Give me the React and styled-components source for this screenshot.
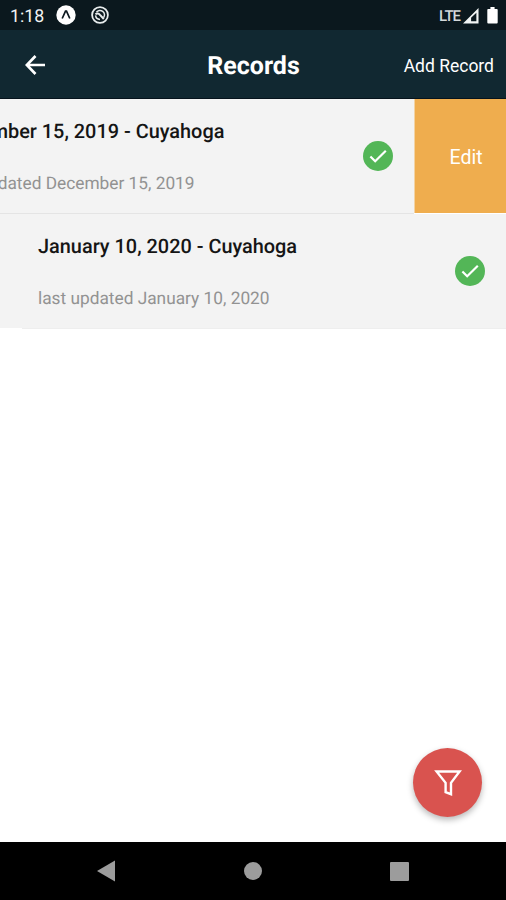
import styled, { createGlobalStyle } from 'styled-components';

const records = [
  {
    title: 'December 15, 2019 - Cuyahoga',
    updated: 'last updated December 15, 2019',
    swiped: true,
  },
  {
    title: 'January 10, 2020 - Cuyahoga',
    updated: 'last updated January 10, 2020',
    swiped: false,
  },
];

const CheckIcon = () => (
  <svg width="30" height="30" viewBox="0 0 30 30">
    <circle cx="15" cy="15" r="15" fill="#53b657" />
    <path d="M7.4 15.4l4.8 4.9L22.8 9.8" fill="none" stroke="#fff" strokeWidth="2.2" />
  </svg>
);

const RecordItem = ({ title, updated, swiped }) => (
  <Item $swiped={swiped}>
    <Content $swiped={swiped}>
      <Details>
        <RecordTitle>{title}</RecordTitle>
        <Updated>{updated}</Updated>
      </Details>
      <CheckIcon />
    </Content>
    {swiped && <EditButton>Edit</EditButton>}
  </Item>
);

export default function App() {
  return (
    <Screen>
      <GlobalStyle />
      <StatusBar>
        <StatusGroup>
          <Clock>1:18</Clock>
          <svg width="20" height="20" viewBox="0 0 20 20">
            <circle cx="10" cy="10" r="9.7" fill="#fff" />
            <path d="M6.2 13.5L9.5 6.2h1l3.3 7.3" fill="none" stroke="#0b181e" strokeWidth="1.7" />
          </svg>
          <DebugIcon width="18" height="18" viewBox="0 0 18 18">
            <circle cx="9" cy="9" r="7.9" fill="none" stroke="#e8eced" strokeWidth="1.8" />
            <path
              d="M5.4 6.2A4.4 4.4 0 1 1 12.6 11.6M4.6 9.4A4.5 4.5 0 0 0 9 13.4"
              fill="none"
              stroke="#e8eced"
              strokeWidth="1.5"
            />
            <path d="M4.4 8.2q3-1.6 4.6.6l3.8 4.2" fill="none" stroke="#e8eced" strokeWidth="2" />
          </DebugIcon>
        </StatusGroup>
        <StatusGroup>
          <Network>LTE</Network>
          <Signal width="16" height="16" viewBox="0 0 17 17">
            <path fill="#f2f4f4" fillRule="evenodd" d="M0 16.5L16.5 0v16.5zM8.6 10.4v3.6h5.6V5z" />
          </Signal>
          <Battery width="11" height="17" viewBox="0 0 11 18">
            <path fill="#fff" d="M3.3 0h4.4v2H10q1 0 1 1v13.5q0 1-1 1H1q-1 0-1-1V3q0-1 1-1h2.3z" />
          </Battery>
        </StatusGroup>
      </StatusBar>

      <Header>
        <BackButton aria-label="Back">
          <svg width="20" height="20" viewBox="0 0 20 20">
            <path d="M10.5 1L1.8 10l8.7 9M2 10h18" fill="none" stroke="#fff" strokeWidth="2.7" />
          </svg>
        </BackButton>
        <Title>Records</Title>
        <AddButton>Add Record</AddButton>
      </Header>

      <List>
        {records.map((record) => (
          <RecordItem key={record.title} {...record} />
        ))}
        <ListEnd />
      </List>

      <FilterButton aria-label="Filter">
        <svg width="28" height="26" viewBox="0 0 28 26">
          <path
            d="M2.6 1.5h23L17 12.8v11.4l-5.4-2v-9.4z"
            fill="none"
            stroke="#fff"
            strokeWidth="2.4"
          />
        </svg>
      </FilterButton>

      <NavBar>
        <svg width="18" height="22" viewBox="0 0 18 22">
          <path d="M0 11L18 .5v21z" fill="#9c9c9c" />
        </svg>
        <Home />
        <Recents />
      </NavBar>
    </Screen>
  );
}

const GlobalStyle = createGlobalStyle`
  * {
    box-sizing: border-box;
  }

  body {
    margin: 0;
    font-family: Roboto, sans-serif;
    text-rendering: geometricPrecision;
  }

  button {
    border: 0;
    padding: 0;
    background: none;
    color: inherit;
    font-family: inherit;
  }
`;

const Screen = styled.div`
  position: relative;
  display: flex;
  flex-direction: column;
  width: 506px;
  height: 900px;
  overflow: hidden;
  background: #fff;
`;

const StatusBar = styled.div`
  display: flex;
  justify-content: space-between;
  height: 30px;
  padding: 0 8px 0 10px;
  background: #0b181e;
  color: #f2f4f4;
`;

const StatusGroup = styled.div`
  display: flex;
  align-items: center;
`;

const Clock = styled.span`
  width: 46px;
  padding-top: 3px;
  font-size: 17.8px;
  line-height: 20px;
`;

const DebugIcon = styled.svg`
  margin-left: 15px;
`;

const Network = styled.span`
  padding-top: 1px;
  font-size: 15px;
  font-weight: 500;
  letter-spacing: -1px;
  color: #d4d9da;
`;

const Signal = styled.svg`
  margin-left: 3px;
  margin-top: 1px;
`;

const Battery = styled.svg`
  margin-left: 8px;
`;

const Header = styled.header`
  display: grid;
  grid-template-columns: 1fr auto 1fr;
  align-items: center;
  height: 69px;
  padding: 2px 12px 0 25px;
  border-bottom: 1px solid #06131c;
  background: #112831;
  color: #fff;
`;

const BackButton = styled.button`
  display: flex;
`;

const Title = styled.h1`
  margin: 3px 12px 0 0;
  font-size: 25px;
  line-height: 30px;
  font-weight: 700;
`;

const AddButton = styled.button`
  justify-self: end;
  padding-top: 2px;
  font-size: 17.5px;
  white-space: nowrap;
`;

const List = styled.main`
  flex: 1;
`;

const Item = styled.div`
  display: flex;
  height: ${(props) => (props.$swiped ? '115px' : '114px')};
`;

const Content = styled.div`
  display: flex;
  flex: none;
  align-items: center;
  justify-content: space-between;
  width: 506px;
  margin-left: ${(props) => (props.$swiped ? '-92px' : '0')};
  padding: 0 21px 0 38px;
  border-bottom: ${(props) => (props.$swiped ? '1px solid #e4e4e4' : '0')};
  background: #f3f3f3;
`;

const Details = styled.div`
  align-self: flex-start;
  padding-top: 20px;
  white-space: nowrap;
`;

const RecordTitle = styled.div`
  font-size: 19.9px;
  line-height: 26px;
  font-weight: 500;
  color: #151515;
`;

const Updated = styled.div`
  margin-top: 26px;
  font-size: 17.3px;
  line-height: 26px;
  color: #929292;
`;

const EditButton = styled.button`
  flex: none;
  width: 92px;
  height: 114px;
  padding: 3px 0 0 11px;
  border-left: 1px solid #f3d3a3;
  background: #efad4e;
  color: #fff;
  font-size: 19.5px;
`;

const ListEnd = styled.div`
  height: 1px;
  margin-left: 22px;
  background: #eee;
`;

const FilterButton = styled.button`
  position: absolute;
  right: 24px;
  bottom: 83px;
  display: flex;
  align-items: center;
  justify-content: center;
  width: 69px;
  height: 69px;
  border-radius: 50%;
  background: #d9534f;
  box-shadow: 0 3px 6px rgba(0, 0, 0, 0.28);
`;

const NavBar = styled.nav`
  display: flex;
  align-items: center;
  justify-content: space-between;
  height: 58px;
  padding: 0 97px;
  background: #000;
`;

const Home = styled.div`
  width: 18px;
  height: 18px;
  border-radius: 50%;
  background: #9c9c9c;
`;

const Recents = styled.div`
  width: 19px;
  height: 19px;
  border-radius: 1px;
  background: #9c9c9c;
`;
